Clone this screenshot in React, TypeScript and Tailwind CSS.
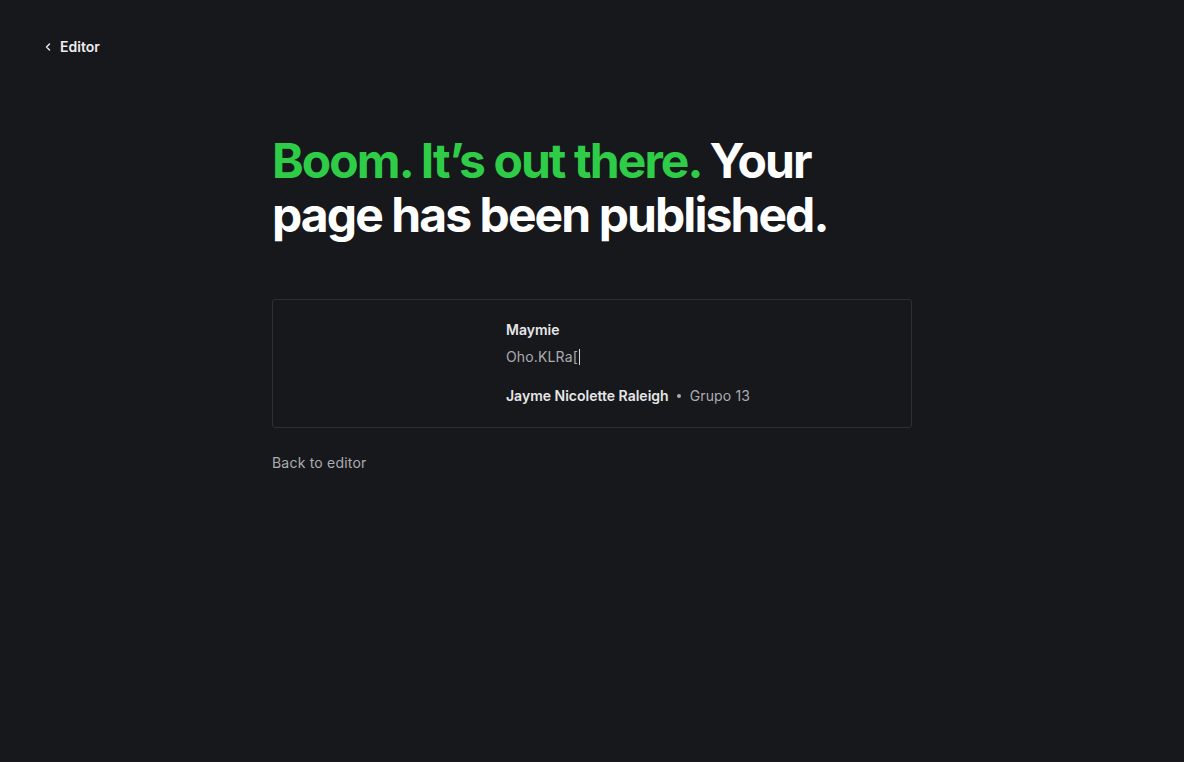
import React from "react";

export default function App() {
  return (
    <div className="min-h-[762px] w-full bg-[#17181c] text-white" style={{ fontFamily: "Inter, 'Noto Sans', sans-serif" }}>
      <div className="px-[44px] pt-[37px]">
        <a className="flex items-center gap-[8px] text-[14px] leading-[20px] font-semibold text-[#ededee]">
          <svg width="8" height="10" viewBox="0 0 8 10" fill="none">
            <path d="M5.5 2 L2.5 5 L5.5 8" stroke="#ededee" strokeWidth="1.4" strokeLinecap="round" strokeLinejoin="round" />
          </svg>
          <span>Editor</span>
        </a>
      </div>
      <div className="mx-auto w-[640px] pt-[77px]">
        <h1 className="max-w-[580px] text-[48px] leading-[54px] font-bold tracking-[-0.04em]">
          <span className="text-[#2ecc47]">Boom. It’s out there.</span> Your page has been published.
        </h1>
        <div className="mt-[57px] flex gap-6 rounded-[3px] border border-[#2e3036] px-6 pt-[20px] pb-[21px]">
          <div className="w-[185px] shrink-0" />
          <div className="flex flex-col">
            <div className="text-[14px] leading-[20px] font-semibold text-[#e6e6e8]">Maymie</div>
            <div className="mt-[7px] flex items-center text-[14px] leading-[20px] tracking-[0.01em] text-[#abacb1]">
              Oho.KLRa[<span className="ml-[1px] inline-block h-[16px] w-[1px] bg-[#d4d4d8]" />
            </div>
            <div className="mt-[19px] flex items-center text-[14px] leading-[20px]">
              <span className="font-semibold text-[#e6e6e8]">Jayme Nicolette Raleigh</span>
              <span className="ml-[8px] mr-[9px] inline-block h-[4px] w-[4px] rounded-full bg-[#abacb1]" />
              <span className="tracking-[0.01em] text-[#abacb1]">Grupo 13</span>
            </div>
          </div>
        </div>
        <div className="mt-[25px] text-[14px] leading-[20px] tracking-[0.015em] text-[#abacb1]">Back to editor</div>
      </div>
    </div>
  );
}
